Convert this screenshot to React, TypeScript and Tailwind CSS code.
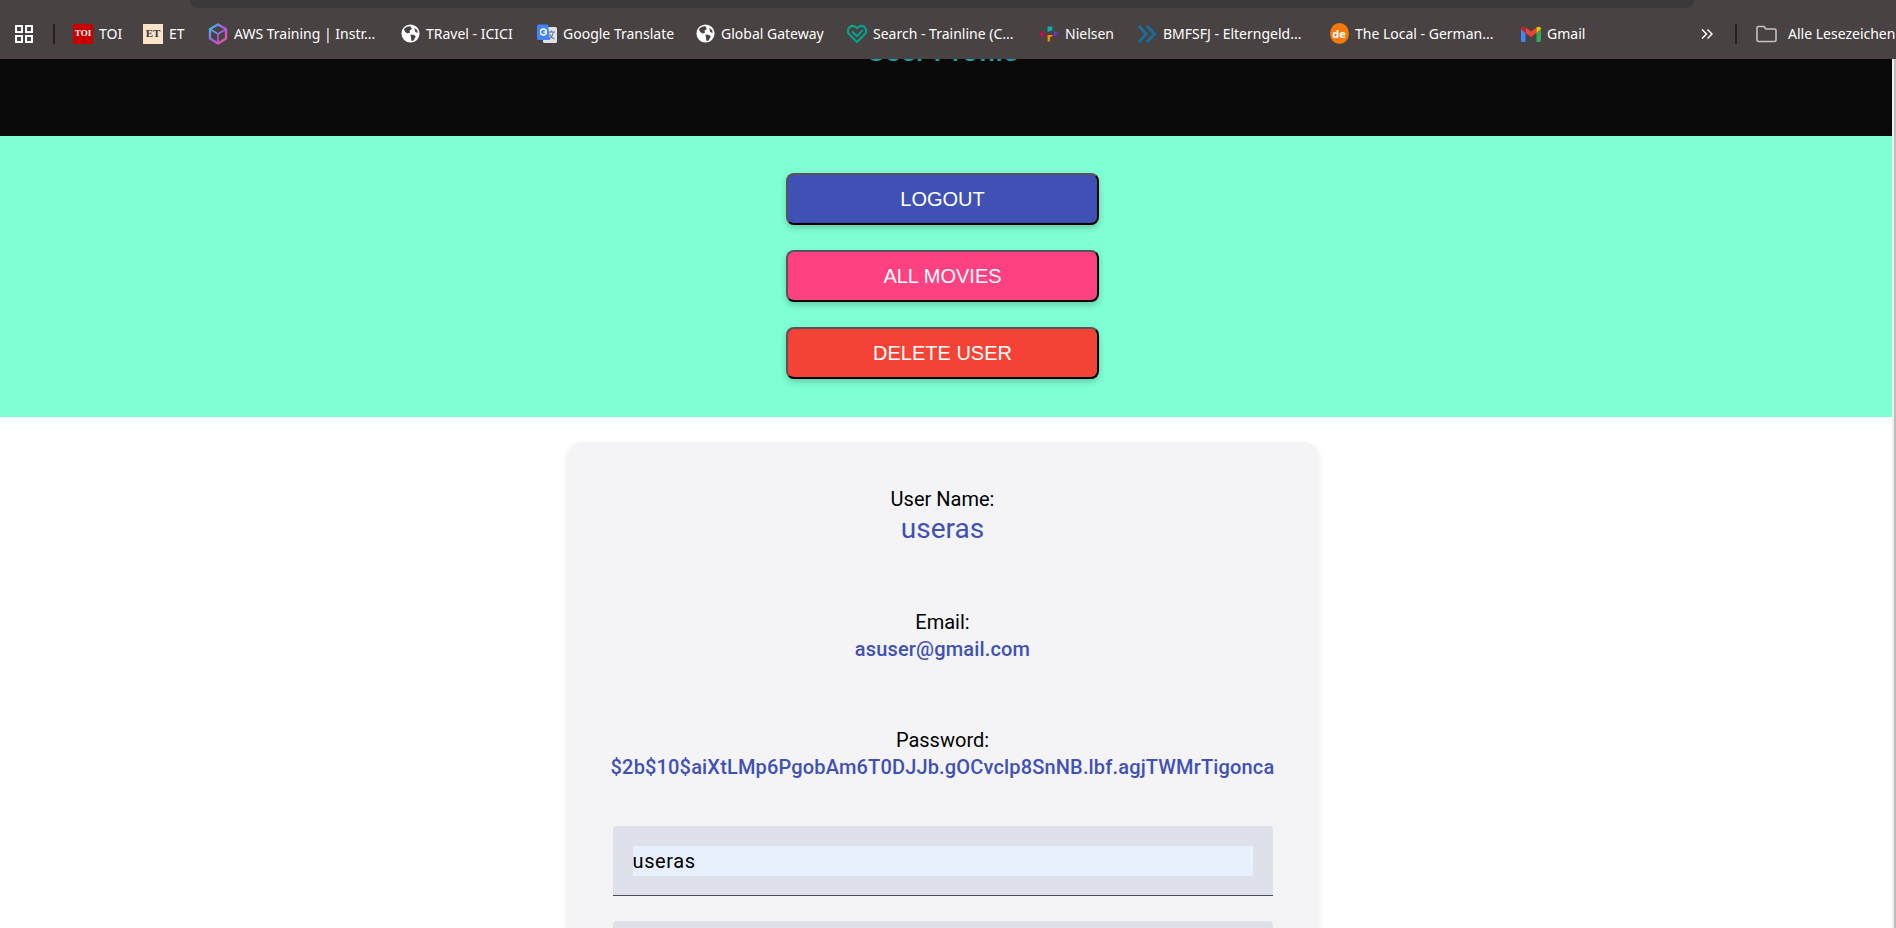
import React from "react";

const Globe = () => (
  <svg width="19" height="19" viewBox="0 0 20 20">
    <circle cx="10" cy="10" r="9.5" fill="#fff" />
    <path d="M3 5.5 C5 3 8 2 10 2.5 L11.5 5 L9 7 L9.5 9 L7 10 L4.5 8.5 Z" fill="#484242" />
    <path d="M10 11 L14 11.5 L15.5 13.5 L13 17.5 L11 17.5 L10.5 14.5 Z" fill="#484242" />
    <path d="M14 4 L17 6.5 L17.5 9.5 L15 8.5 Z" fill="#484242" />
  </svg>
);

const Cube = () => (
  <svg width="20" height="22" viewBox="0 0 20 22" fill="none" strokeWidth="2.4" strokeLinejoin="round">
    <defs>
      <linearGradient id="awsg" x1="0" y1="0" x2="1" y2="1">
        <stop offset="0" stopColor="#35c3e8" />
        <stop offset="0.5" stopColor="#a45be8" />
        <stop offset="1" stopColor="#f0568a" />
      </linearGradient>
    </defs>
    <path d="M10 1.5 L18 6 V15.5 L10 20.5 L2 15.5 V6 Z" stroke="url(#awsg)" />
    <path d="M2.5 6.5 L10 11 L17.5 6.5 M10 11 V20" stroke="url(#awsg)" strokeWidth="1.6" />
  </svg>
);

const Translate = () => (
  <svg width="20" height="20" viewBox="0 0 20 20">
    <rect x="6" y="3" width="14" height="16" rx="1.5" fill="#dfe3e8" />
    <path d="M11 8 H18 M14.5 6.5 V8 M12.5 15 C15 13 16 11 16.5 8 M13 10.5 C14 13 16 14.5 17.5 15" stroke="#70757a" strokeWidth="1.1" fill="none" />
    <path d="M1.5 0.5 H11 L13 16 H1.5 A1.5 1.5 0 0 1 0 14.5 V2 A1.5 1.5 0 0 1 1.5 0.5 Z" fill="#4285f4" />
    <circle cx="6.5" cy="8" r="3" fill="none" stroke="#fff" strokeWidth="1.3" />
    <path d="M6.5 8 H9.8" stroke="#fff" strokeWidth="1.3" />
  </svg>
);

const Heart = () => (
  <svg width="21" height="20" viewBox="0 0 21 20" fill="none" stroke="#05a38d" strokeWidth="2.2" strokeLinejoin="round" strokeLinecap="round">
    <path d="M10.5 18.5 L2 10 C-0.5 6.5 2 1.5 6 1.5 C8 1.5 9.5 2.5 10.5 4 C11.5 2.5 13 1.5 15 1.5 C19 1.5 21.5 6.5 19 10 Z" />
    <path d="M6 8 L10.5 12.5 L16 6.5" />
  </svg>
);

const Nielsen = () => (
  <svg width="21" height="20" viewBox="0 0 21 20">
    <path d="M0 10.5 L5 7.5 V13.5 Z" fill="#e5004f" />
    <path d="M9 2 H14 V6 L9 8 Z" fill="#08b3ad" />
    <path d="M15.5 6.5 L20.5 9.5 L15.5 12.5 Z" fill="#7a2be2" />
    <path d="M9 11 H15 L11.5 14 V18 H9 Z" fill="#f78b00" />
  </svg>
);

const Chevrons = () => (
  <svg width="22" height="20" viewBox="0 0 22 20" fill="none" stroke="#1b6c98" strokeWidth="3.4">
    <path d="M2 1 L10 10 L2 19" />
    <path d="M11 1 L19 10 L11 19" />
  </svg>
);

const De = () => (
  <span className="w-[19px] h-[21px] rounded-[50%] bg-[#f57a0b] text-white text-[11px] font-bold flex items-center justify-center leading-none font-['Open_Sans',sans-serif]">
    de
  </span>
);

const Gmail = () => (
  <svg width="20" height="16" viewBox="0 0 20 16">
    <path d="M0 3 V14.5 A1.5 1.5 0 0 0 1.5 16 H4.5 V7 Z" fill="#4285f4" />
    <path d="M20 3 V14.5 A1.5 1.5 0 0 1 18.5 16 H15.5 V7 Z" fill="#34a853" />
    <path d="M4.5 7 L10 11 L15.5 7 V1.5 L10 5.5 L4.5 1.5 Z" fill="#ea4335" />
    <path d="M0 3 C0 1 2.5 0 4.5 1.5 V7 Z" fill="#c5221f" />
    <path d="M20 3 C20 1 17.5 0 15.5 1.5 V7 Z" fill="#fbbc04" />
  </svg>
);

const Toi = () => (
  <span className="w-5 h-5 bg-[#c80000] text-white text-[9px] font-bold flex items-center justify-center leading-none font-['Liberation_Serif',serif]">
    TOI
  </span>
);

const Et = () => (
  <span className="w-5 h-5 bg-[#fbe3c8] text-[#33383d] text-[11px] font-bold flex items-center justify-center leading-none font-['Liberation_Serif',serif]">
    ET
  </span>
);

const bookmarks = [
  { icon: <Toi />, label: "TOI", w: "w-[70px]" },
  { icon: <Et />, label: "ET", w: "w-[65px]" },
  { icon: <Cube />, label: "AWS Training | Instr...", w: "w-[192px]" },
  { icon: <Globe />, label: "TRavel - ICICI", w: "w-[137px]" },
  { icon: <Translate />, label: "Google Translate", w: "w-[158px]" },
  { icon: <Globe />, label: "Global Gateway", w: "w-[152px]" },
  { icon: <Heart />, label: "Search - Trainline (C...", w: "w-[192px]" },
  { icon: <Nielsen />, label: "Nielsen", w: "w-[98px]" },
  { icon: <Chevrons />, label: "BMFSFJ - Elterngeld...", w: "w-[192px]" },
  { icon: <De />, label: "The Local - German...", w: "w-[192px]" },
  { icon: <Gmail />, label: "Gmail", w: "w-[120px]" },
];

function BookmarkBar() {
  return (
    <div className="relative h-[59px] bg-[#484242] flex items-center pt-[8px] pl-[15px] text-white text-[14px] whitespace-nowrap overflow-hidden font-['Noto_Sans',sans-serif]">
      <div className="absolute top-0 left-[190px] w-[1504px] h-2 bg-[#3b393a] rounded-b-xl" />
      <svg width="18" height="18" viewBox="0 0 18 18" fill="none" stroke="#fff" strokeWidth="2" className="shrink-0">
        <rect x="1" y="1" width="6" height="6" />
        <rect x="11" y="1" width="6" height="6" />
        <rect x="1" y="11" width="6" height="6" />
        <rect x="11" y="11" width="6" height="6" />
      </svg>
      <div className="w-0.5 h-5 bg-[#222] ml-5 mr-[18px] shrink-0" />
      {bookmarks.map((b) => (
        <div key={b.label + b.w} className={`${b.w} shrink-0 flex items-center gap-[6px]`}>
          <span className="shrink-0 w-5 flex justify-center">{b.icon}</span>
          <span>{b.label}</span>
        </div>
      ))}
      <svg width="12" height="12" viewBox="0 0 12 12" fill="none" stroke="#fff" strokeWidth="1.5" className="shrink-0 ml-[60px]">
        <path d="M1 1.5 L5.5 6 L1 10.5 M6.5 1.5 L11 6 L6.5 10.5" />
      </svg>
      <div className="w-0.5 h-5 bg-[#222] ml-[22px] mr-[19px] shrink-0" />
      <svg width="21" height="18" viewBox="0 0 21 18" fill="none" stroke="#c4c4c4" strokeWidth="1.6" className="shrink-0">
        <path d="M1 3 A1.5 1.5 0 0 1 2.5 1.5 H8 L10 4 H18.5 A1.5 1.5 0 0 1 20 5.5 V15 A1.5 1.5 0 0 1 18.5 16.5 H2.5 A1.5 1.5 0 0 1 1 15 Z" />
      </svg>
      <span className="ml-[11px] shrink-0">Alle Lesezeichen</span>
    </div>
  );
}

function ActionButton({ label, color }: { label: string; color: string }) {
  return (
    <button
      className={`w-[313px] h-[52px] rounded-lg border-2 border-t-[#555] border-l-[#555] border-r-black border-b-black text-white text-[20px] shadow-[0_3px_6px_rgba(0,0,0,0.2)] font-['Liberation_Sans',sans-serif] ${color}`}
    >
      {label}
    </button>
  );
}

function Field({ label, value, valueClass, className }: { label: string; value: string; valueClass: string; className: string }) {
  return (
    <div className={`text-center ${className}`}>
      <div className="text-[20px] leading-[30px] text-black">{label}</div>
      <div className={`text-[#3f51b5] ${valueClass}`}>{value}</div>
    </div>
  );
}

export default function App() {
  return (
    <div className="h-[928px] overflow-hidden bg-white font-['Roboto',sans-serif]">
      <BookmarkBar />
      <div className="flex h-[869px]">
        <main className="flex-1 min-w-0 overflow-hidden">
          <header className="h-[77px] bg-[#090909] overflow-hidden text-center pr-[7px]">
            <h1 className="-mt-[28px] text-[29px] leading-10 font-medium text-[#17a2a8]">User Profile</h1>
          </header>
          <section className="h-[281px] bg-[#7fffd4] flex flex-col items-center gap-[25px] pt-[37px] pr-[7px]">
            <ActionButton label="LOGOUT" color="bg-[#3f51b5]" />
            <ActionButton label="ALL MOVIES" color="bg-[#ff4081]" />
            <ActionButton label="DELETE USER" color="bg-[#f44336]" />
          </section>
          <div className="pr-[7px]">
            <section className="mx-auto mt-[25px] w-[752px] h-[600px] bg-[#f4f4f6] rounded-2xl shadow-[0_2px_6px_rgba(0,0,0,0.08)] px-[46px] pt-[42px]">
              <Field label="User Name:" value="useras" valueClass="text-[28px] leading-[30px]" className="" />
              <Field label="Email:" value="asuser@gmail.com" valueClass="text-[20px] leading-[24px] font-medium tracking-[0.16px]" className="mt-[63px]" />
              <Field label="Password:" value="$2b$10$aiXtLMp6PgobAm6T0DJJb.gOCvclp8SnNB.lbf.agjTWMrTigonca" valueClass="text-[20px] leading-[24px] font-medium tracking-[0.16px] whitespace-nowrap -mx-4" className="mt-[64px]" />
              <div className="mt-[47px] h-[70px] bg-[#dfe1ea] rounded-t border-b-[1.5px] border-[#4b4a5a] px-5 pt-5">
                <div className="h-[30px] bg-[#e8f0fe] text-[20px] leading-[30px] text-black tracking-[0.03em]">useras</div>
              </div>
              <div className="mt-[25px] h-[70px] bg-[#dfe1ea] rounded-t" />
            </section>
          </div>
        </main>
        <div className="w-1 flex shrink-0">
          <div className="w-0.5 bg-[#efefef]" />
          <div className="w-0.5 bg-[#bdbdbd]" />
        </div>
      </div>
    </div>
  );
}
